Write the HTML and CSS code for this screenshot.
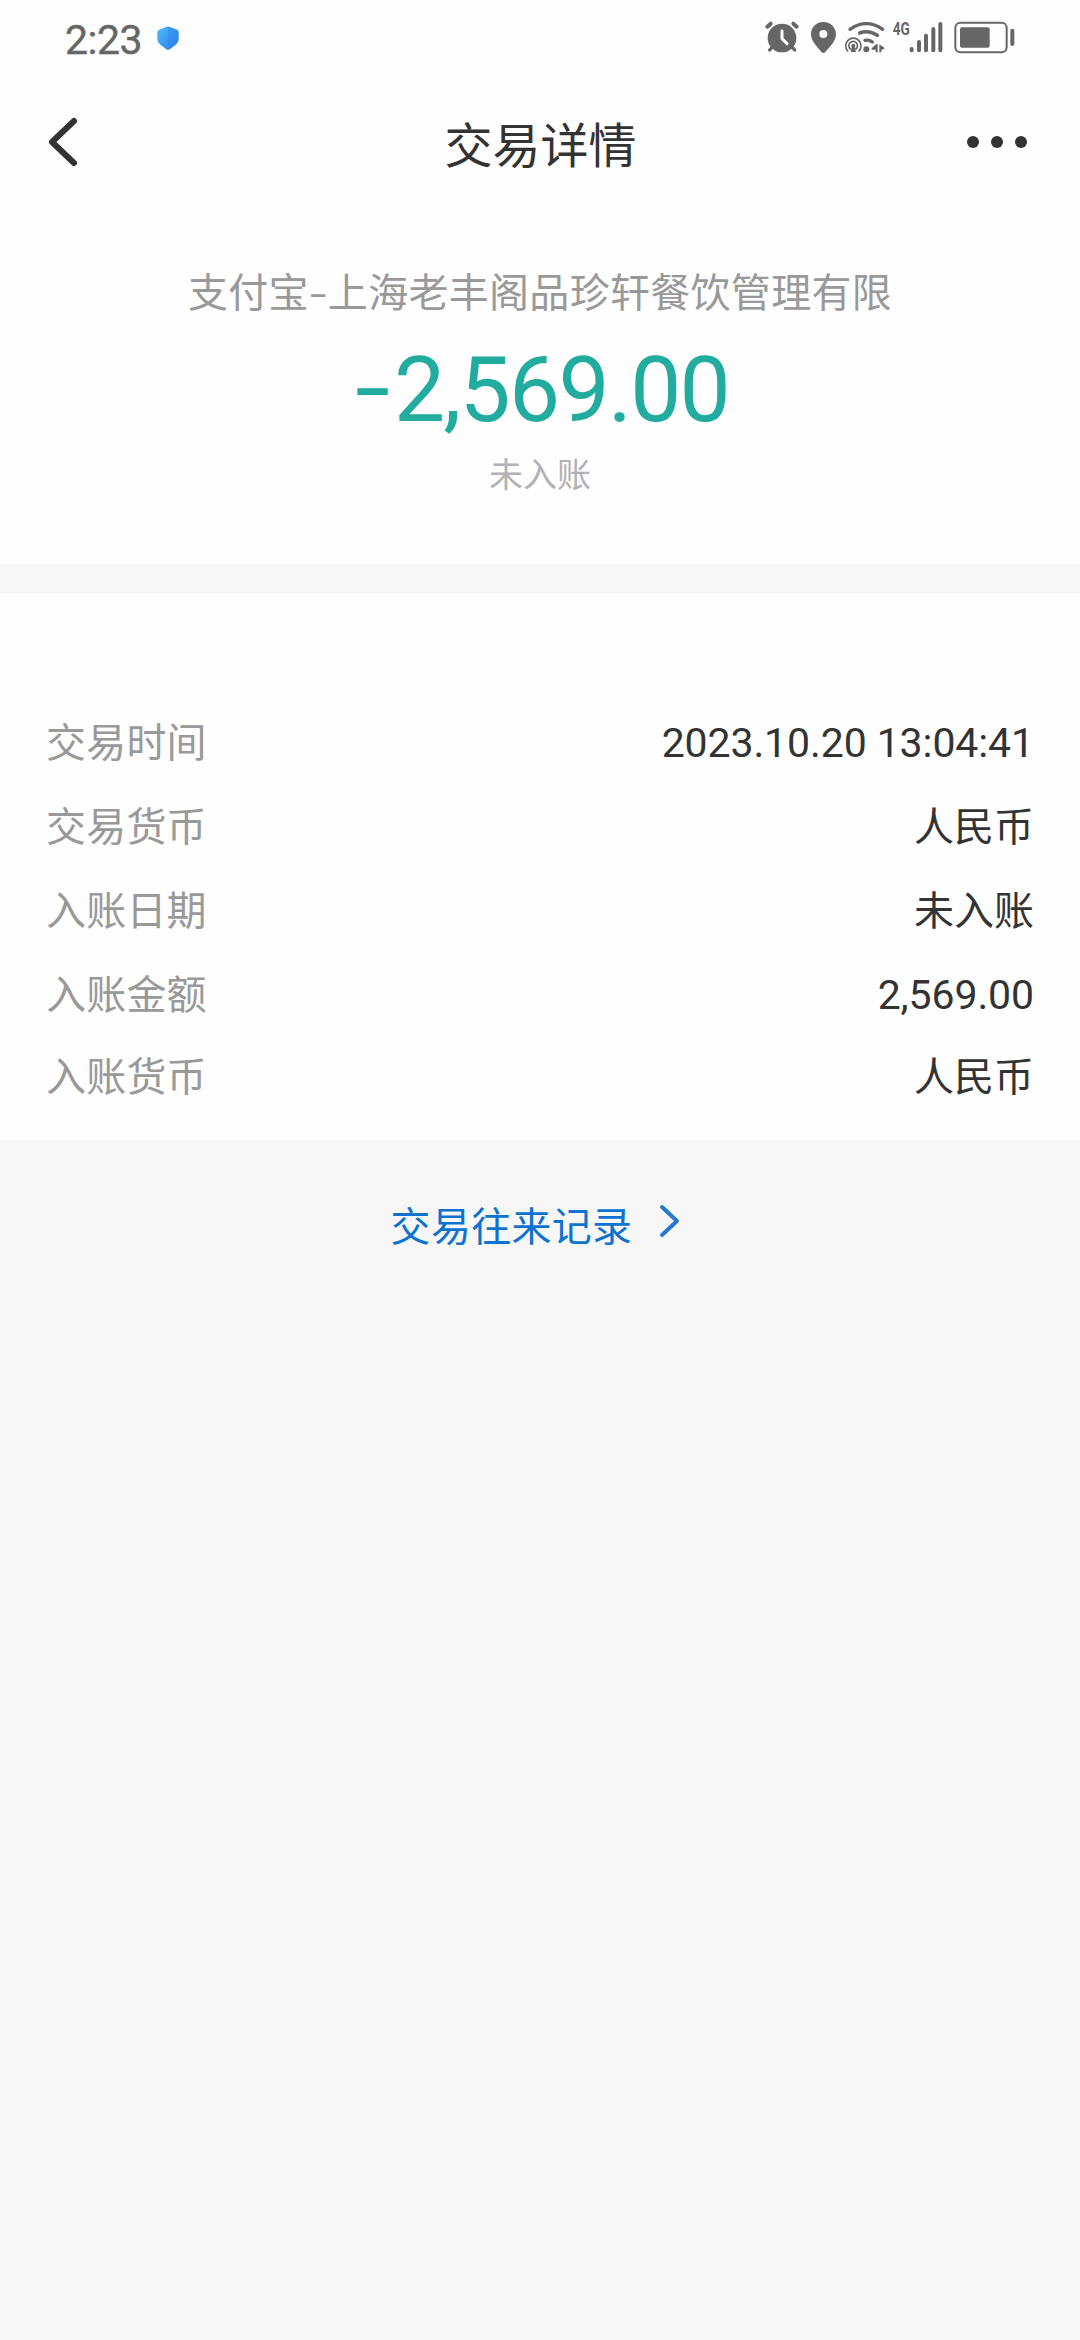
FILE: index.html
```html
<!DOCTYPE html>
<html lang="zh-CN">
<head>
<meta charset="utf-8">
<title>交易详情</title>
<link rel="stylesheet" href="styles.css">
</head>
<body>
<div class="status-bar">
  <div class="clock-group">
    <span class="clock">2:23</span>
    <svg class="shield" viewBox="0 0 66 71">
      <defs><linearGradient id="shade" x1="0" y1="0" x2="1" y2="1"><stop offset="0" stop-color="#48c0fb"/><stop offset="1" stop-color="#2f7dec"/></linearGradient></defs>
      <path d="M29 2 Q33 0 37 2 L60 11 Q65 13 65 18 V38 Q65 49 56 56 L38 69 Q33 72 28 69 L10 56 Q1 49 1 38 V18 Q1 13 6 11Z" fill="url(#shade)"/>
      <path d="M33 1 Q35 1 37 2 L60 11 Q65 13 65 18 V38 Q65 49 56 56 L38 69 Q35 71 33 71Z" fill="#2c82ec" opacity=".4"/>
    </svg>
  </div>
  <svg class="status-icons" viewBox="0 0 840 240" fill="#666" stroke="none">
    <g stroke="#666" stroke-width="10" stroke-linecap="round">
      <circle cx="93" cy="114" r="43" stroke="none"/>
      <path d="M49 80 L59 71 M127 71 L137 80" stroke-width="12"/>
      <path d="M63 142 L56 150 M124 142 L131 150"/>
      <path d="M93 92 V116 L108 131" fill="none" stroke="#fff" stroke-width="9"/>
    </g>
    <path fill-rule="evenodd" d="M217 66 C194 66 180 83 180 103 C180 124 200 142 211 156 Q217 162 223 156 C235 142 255 124 255 103 C255 83 240 66 217 66Z M217 90 A12 12 0 1 1 217 114 A12 12 0 1 1 217 90Z"/>
    <g fill="none" stroke="#666" stroke-width="10" stroke-linecap="round">
      <path d="M297 88 Q346 54 395 88"/>
      <path d="M326 99 Q354 89 379 106" stroke-width="11"/>
      <path d="M342 121 Q354 118 364 126" stroke-width="10"/>
      <g stroke-width="5"><path d="M290 153 A23 23 0 1 1 324 153"/><path d="M298 147 A13 13 0 1 1 315 147"/></g>
    </g>
    <circle cx="307" cy="137" r="6"/><path d="M303 138 H311 L315 156 H299Z"/>
    <circle cx="346" cy="148" r="9"/>
    <path d="M362 145 L375 133 H380 V157 H374 V149 H362Z M385 133 L402 145 L391 150 V157 H385Z"/>
    <text class="network" x="425" y="106" textLength="51" lengthAdjust="spacingAndGlyphs">4G</text>
    <g stroke="#666" stroke-width="12" stroke-linecap="round"><path d="M482 147V151 M504 126V151 M525 107V151 M547 87V151 M568 72V151"/></g>
    <rect x="613" y="68" width="154" height="89" rx="15" fill="none" stroke="#666" stroke-width="6"/>
    <rect x="627" y="82" width="89" height="61" rx="6"/>
    <rect x="778" y="86" width="12" height="52" rx="6"/>
  </svg>
</div>
<header class="nav">
  <svg class="back" viewBox="0 0 32 52"><path d="M27 5 L5 26 L27 47"/></svg>
  <h1 class="title">交易详情</h1>
  <svg class="more" viewBox="0 0 60 12"><circle cx="6" cy="6" r="6"/><circle cx="30" cy="6" r="6"/><circle cx="54" cy="6" r="6"/></svg>
</header>
<section class="summary">
  <div class="merchant">支付宝<span class="dash">-</span>上海老丰阁品珍轩餐饮管理有限</div>
  <div class="amount"><span class="minus">-</span>2,569.00</div>
  <div class="state">未入账</div>
</section>
<dl class="details">
  <div class="row"><dt>交易时间</dt><dd class="number">2023.10.20 13:04:41</dd></div>
  <div class="row"><dt>交易货币</dt><dd>人民币</dd></div>
  <div class="row"><dt>入账日期</dt><dd>未入账</dd></div>
  <div class="row"><dt>入账金额</dt><dd class="number">2,569.00</dd></div>
  <div class="row last"><dt>入账货币</dt><dd>人民币</dd></div>
</dl>
<a class="history">交易往来记录<svg class="chevron" viewBox="0 0 22 34"><path d="M3 3 L18 17 L3 31"/></svg></a>
</body>
</html>
```
FILE: styles.css
```css
* { box-sizing: border-box; }
body {
  margin: 0;
  width: 1080px;
  min-height: 2340px;
  display: flex;
  flex-direction: column;
  background: #f7f7f7;
  color: #333;
  font-family: "Noto Sans CJK SC", sans-serif;
  font-size: 40px;
}
svg { display: block; flex: none; }
.status-bar {
  height: 80px;
  padding: 0 49px 0 65px;
  display: flex;
  justify-content: space-between;
  background: #fefefe;
}
.clock-group { display: flex; align-items: center; gap: 16px; height: 76px; }
.clock { width: 76px; margin-top: 4px; color: #666; font-family: Roboto, sans-serif; font-size: 41px; letter-spacing: -.500px; line-height: 50px; white-space: nowrap; -webkit-text-stroke: .4px #666; }
.shield { width: 22px; height: 24px; }
.status-icons { width: 280px; height: 80px; }
.network { font: 700 54px Roboto, sans-serif; }
.nav {
  height: 124px;
  padding: 0 53px 0 47px;
  display: flex;
  align-items: center;
  justify-content: space-between;
  background: #fefefe;
}
.back { width: 32px; height: 52px; fill: none; stroke: #333; stroke-width: 6; stroke-linecap: round; stroke-linejoin: round; }
.title { margin: 0 0 0 35px; font-size: 48px; font-weight: 400; line-height: 60px; }
.more { width: 60px; height: 12px; fill: #333; }
.summary {
  height: 360px;
  padding-top: 59px;
  display: flex;
  flex-direction: column;
  align-items: center;
  background: #fefefe;
}
.merchant { height: 54px; line-height: 54px; color: #999; letter-spacing: .300px; white-space: nowrap; }
.dash { display: inline-block; width: 19px; text-align: center; transform: scaleX(1.400); }
.amount {
  height: 108px;
  margin-top: 19px;
  padding-left: 5px;
  display: flex;
  align-items: center;
  color: #22aca0;
  font-family: Roboto, sans-serif;
  font-size: 91px;
  line-height: 108px;
  letter-spacing: -1.700px;
}
.minus { width: 33px; margin: 0 5px 4px 0; display: flex; justify-content: center; letter-spacing: 0; transform: scaleX(1.400); }
.state { height: 44px; margin-top: 7px; color: #b3b1b5; font-size: 34px; line-height: 44px; }
.details { height: 547px; margin: 29px 0 0; padding: 105px 46px 0 46px; background: #fefefe; }
.row { height: 84px; display: flex; justify-content: space-between; line-height: 84px; }
.last { margin-top: -2px; }
dt { color: #999; letter-spacing: .200px; }
dd { margin: 0; }
.number { padding-top: 3px; font-family: Roboto, sans-serif; font-size: 41px; letter-spacing: -.100px; }
.history { height: 168px; padding: 0 8px 0 0; display: flex; align-items: center; justify-content: center; gap: 27px; color: #0e73d0; letter-spacing: .300px; line-height: 60px; }
.chevron { width: 22px; height: 34px; margin-top: -6px; fill: none; stroke: #2779d0; stroke-width: 4; stroke-linecap: round; stroke-linejoin: round; }
```
